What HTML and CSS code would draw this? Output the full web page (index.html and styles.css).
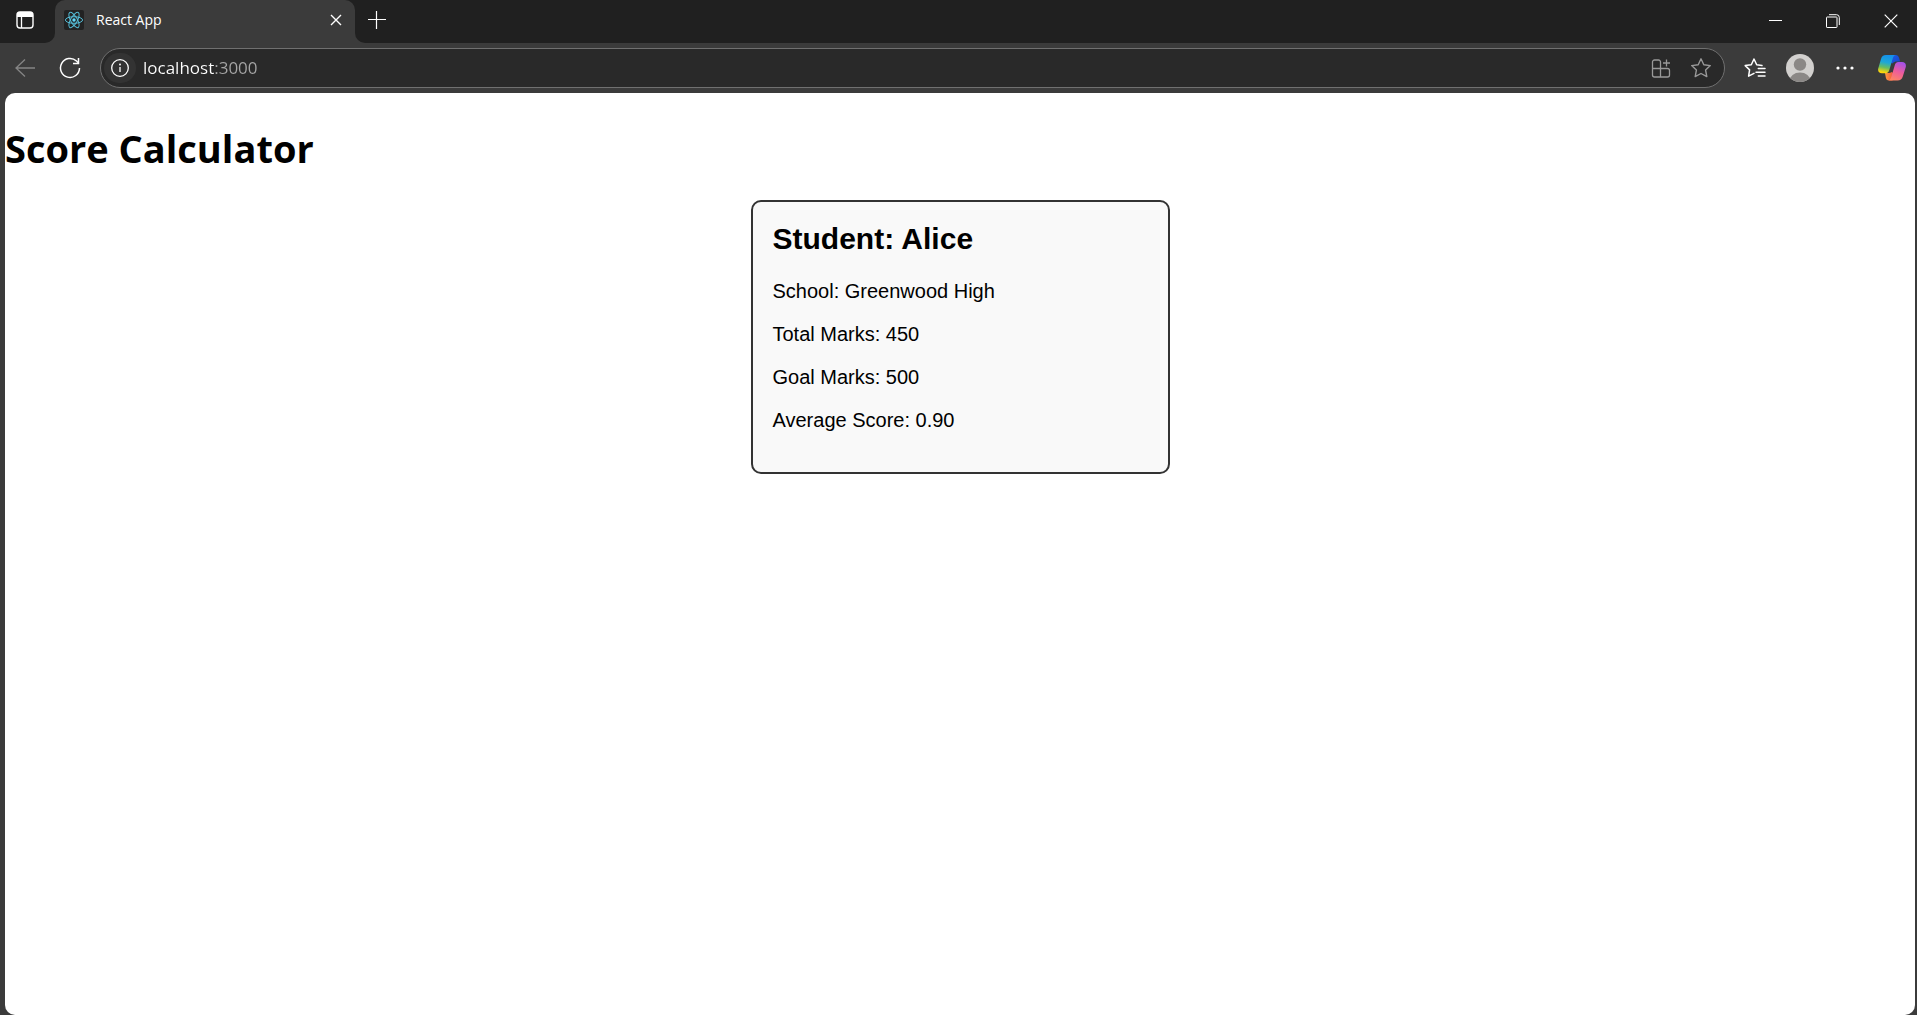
FILE: index.html
```html
<!DOCTYPE html>
<html lang="en">
<head>
<meta charset="utf-8">
<meta name="viewport" content="width=device-width, initial-scale=1">
<title>React App</title>
<link rel="stylesheet" href="styles.css">
</head>
<body>
<div class="browser">
  <header class="titlebar">
    <div class="titlebar-start">
      <button class="icon-button" type="button" aria-label="Tab actions">
        <svg width="20" height="20" viewBox="0 0 20 20"><rect x="2" y="2" width="16" height="16" rx="3" fill="none" stroke="#fff" stroke-width="1.4"/><path d="M2 7V5a3 3 0 0 1 3-3h10a3 3 0 0 1 3 3v2z" fill="#fff"/><path d="M6.500 6v12" stroke="#fff" stroke-width="1.3"/></svg>
      </button>
    </div>
    <div class="tab-slot">
      <div class="tab">
        <svg class="favicon" width="20" height="20" viewBox="0 0 20 20"><rect width="20" height="20" rx="2" fill="#222"/><g fill="none" stroke="#55bcd6" stroke-width="1"><ellipse cx="10" cy="10" rx="8.600" ry="3.300"/><ellipse cx="10" cy="10" rx="8.600" ry="3.300" transform="rotate(60 10 10)"/><ellipse cx="10" cy="10" rx="8.600" ry="3.300" transform="rotate(120 10 10)"/></g><circle cx="10" cy="10" r="1.700" fill="#61dafb"/></svg>
        <span class="tab-title">React App</span>
        <button class="tab-close" type="button" aria-label="Close tab">
          <svg width="12" height="12" viewBox="0 0 12 12"><path d="M1 1l10 10M11 1L1 11" stroke="#fff" stroke-width="1.400"/></svg>
        </button>
      </div>
    </div>
    <div class="titlebar-end">
      <button class="icon-button new-tab" type="button" aria-label="New tab">
        <svg width="18" height="18" viewBox="0 0 18 18"><path d="M0 8.500h18M8.500 0v18" stroke="#fff" stroke-width="1.200"/></svg>
      </button>
      <div class="window-controls">
        <button class="icon-button" type="button" aria-label="Minimize">
          <svg width="13" height="13" viewBox="0 0 13 13"><path d="M0 6.500h13" stroke="#fff"/></svg>
        </button>
        <button class="icon-button" type="button" aria-label="Restore">
          <svg width="14" height="14" viewBox="0 0 14 14" fill="none" stroke="#fff"><rect x=".5" y="3" width="10.500" height="10.500" rx=".6"/><path d="M3 .7h7.500A2.800 2.800 0 0 1 13.300 3.500V11"/></svg>
        </button>
        <button class="icon-button" type="button" aria-label="Close">
          <svg width="14" height="14" viewBox="0 0 14 14"><path d="M.7.7l12.600 12.600M13.300.7L.7 13.300" stroke="#fff" stroke-width="1.200"/></svg>
        </button>
      </div>
    </div>
  </header>

  <nav class="toolbar" aria-label="Browser">
    <button class="icon-button" type="button" aria-label="Back">
      <svg width="22" height="22" viewBox="0 0 22 22" fill="none" stroke="#858585" stroke-width="1.300"><path d="M21 11H2M11 2.500L2 11l9 8.500"/></svg>
    </button>
    <button class="icon-button" type="button" aria-label="Refresh">
      <svg width="22" height="22" viewBox="0 0 22 22" fill="none" stroke="#fff" stroke-width="1.500"><path d="M20.500 11A9.500 9.500 0 1 1 17.500 4L19.500 6"/><path d="M19.500 1v5.500H14"/></svg>
    </button>
    <div class="address-bar">
      <button class="site-info" type="button" aria-label="Site information">
        <svg width="20" height="20" viewBox="0 0 20 20" fill="none" stroke="#fff" stroke-width="1.300"><circle cx="10" cy="10" r="8.300"/><path d="M10 9v5"/><circle cx="10" cy="6.500" r=".4"/></svg>
      </button>
      <input class="address" type="text" aria-label="Address" value="localhost:3000" spellcheck="false">
      <button class="icon-button" type="button" aria-label="Install app">
        <svg width="20" height="20" viewBox="0 0 20 20" fill="none" stroke="#999" stroke-width="1.300"><path d="M9.500 10.500V4a2 2 0 0 0-2-2H3.500a2 2 0 0 0-2 2v13a2 2 0 0 0 2 2h13a2 2 0 0 0 2-2v-4.500a2 2 0 0 0-2-2h-15M9.500 10.500V19M15.500 1.500v7M12 5h7"/></svg>
      </button>
      <button class="icon-button" type="button" aria-label="Add to favorites">
        <svg width="22" height="22" viewBox="0 0 22 22" fill="none" stroke="#999" stroke-width="1.400" stroke-linejoin="round"><path d="M11 1.800l2.800 5.900 6.500.9-4.700 4.500 1.200 6.500-5.800-3.100-5.800 3.100 1.200-6.500L1.700 8.600l6.500-.9z"/></svg>
      </button>
    </div>
    <button class="icon-button" type="button" aria-label="Favorites">
      <svg width="22" height="22" viewBox="0 0 22 22" fill="none" stroke="#fff" stroke-width="1.500" stroke-linejoin="round" stroke-linecap="round"><path d="M18 8.600l-5.300-.9L10 2 7.300 7.700 1.200 8.600l4.400 4.300-1 6.300L10 16.300M14.300 11.500H21M12 15.300h9M14.300 19H21"/></svg>
    </button>
    <button class="icon-button" type="button" aria-label="Profile">
      <svg width="28" height="28" viewBox="0 0 28 28"><defs><clipPath id="avatar-clip"><circle cx="14" cy="14" r="14"/></clipPath></defs><g clip-path="url(#avatar-clip)"><rect width="28" height="28" fill="#d2d0ce"/><circle cx="14" cy="10.500" r="6.200" fill="#8b8886"/><ellipse cx="14" cy="27" rx="10.500" ry="8.500" fill="#8b8886"/></g></svg>
    </button>
    <button class="icon-button" type="button" aria-label="Settings and more">
      <svg width="18" height="6" viewBox="0 0 18 6" fill="#fff"><circle cx="2" cy="3" r="1.600"/><circle cx="9" cy="3" r="1.600"/><circle cx="16" cy="3" r="1.600"/></svg>
    </button>
    <button class="icon-button copilot" type="button" aria-label="Copilot">
      <svg width="28" height="28" viewBox="0 0 28 28">
        <defs>
          <linearGradient id="cp-left" x1=".5" y1="0" x2=".3" y2="1"><stop offset="0" stop-color="#1590ea"/><stop offset=".4" stop-color="#1da7d8"/><stop offset=".68" stop-color="#67bd61"/><stop offset=".95" stop-color="#ffd60a"/></linearGradient>
          <linearGradient id="cp-right" x1=".7" y1="0" x2=".3" y2="1"><stop offset="0" stop-color="#a551e8"/><stop offset=".5" stop-color="#ed5c9c"/><stop offset="1" stop-color="#ff8562"/></linearGradient>
          <linearGradient id="cp-top" x1="0" y1="0" x2="1" y2="1"><stop offset="0" stop-color="#1c5ce8"/><stop offset="1" stop-color="#1746c8"/></linearGradient>
          <linearGradient id="cp-bottom" x1="0" y1="0" x2="1" y2="0"><stop offset="0" stop-color="#ff9a3e"/><stop offset="1" stop-color="#ed493e"/></linearGradient>
        </defs>
        <path d="M14 1h3.500c2 0 3 1.200 3.600 3l1 3.500h-3c-2 0-3.500.5-4.600 2L12 8z" fill="url(#cp-top)"/>
        <path d="M7 19h4c1 0 1.800-.3 2.500-1l3.500 2-2.500 6.500H11c-2 0-2.700-1.300-3.200-3z" fill="url(#cp-bottom)"/>
        <path d="M8 1h10c-1.800 0-2.600 1.300-3.200 3.200L11.300 16c-.7 2.300-1.800 3.300-4 3.300H4C1 19.300-.5 17.500.3 14.200L3 5C3.700 2.400 5.200 1 8 1z" fill="url(#cp-left)"/>
        <path d="M20.500 8H24c3 0 4.500 2 3.700 5.300l-2.900 9.200c-.8 2.600-2.500 4-5.300 4H10c1.800 0 2.600-1.300 3.200-3.200l3.500-11.800C17.300 9.200 18.300 8 20.500 8z" fill="url(#cp-right)"/>
      </svg>
    </button>
  </nav>

  <main class="page">
    <h1 class="page-title">Score Calculator</h1>
    <section class="score-card">
      <h2 class="student">Student: Alice</h2>
      <p class="detail">School: Greenwood High</p>
      <p class="detail">Total Marks: 450</p>
      <p class="detail">Goal Marks: 500</p>
      <p class="detail">Average Score: 0.90</p>
    </section>
  </main>
</div>
</body>
</html>
```
FILE: styles.css
```css
:root {
  --frame: #3b3b3b;
  --frame-dark: #202020;
  --field: #292929;
  --ui-font: "Open Sans", "Noto Sans", sans-serif;
}

* {
  box-sizing: border-box;
}

body {
  margin: 0;
  background: var(--frame);
  font-family: var(--ui-font);
}

button {
  padding: 0;
  border: 0;
  background: none;
  color: inherit;
}

svg {
  display: block;
}

.browser {
  display: flex;
  flex-direction: column;
  min-height: 100vh;
}

.icon-button {
  display: grid;
  place-items: center;
  flex: none;
}

/* Title bar */
.titlebar {
  display: flex;
  height: 43px;
  color: #fff;
}

.titlebar-start {
  display: grid;
  place-items: center;
  width: 55px;
  padding: 0 6px 3px 0;
  background: var(--frame-dark);
  border-bottom-right-radius: 10px;
}

.tab-slot {
  width: 300px;
  background: linear-gradient(var(--frame-dark) 50%, var(--frame) 50%);
}

.tab {
  display: flex;
  align-items: center;
  gap: 12px;
  height: 100%;
  padding: 0 13px 3px 9px;
  background: var(--frame);
  border-radius: 10px 10px 0 0;
}

.tab-title {
  flex: 1;
  font-size: 14px;
  line-height: 20px;
}

.tab-close {
  display: grid;
  place-items: center;
}

.titlebar-end {
  display: flex;
  flex: 1;
  justify-content: space-between;
  background: var(--frame-dark);
  border-bottom-left-radius: 10px;
}

.new-tab {
  width: 44px;
  padding-bottom: 3px;
}

.window-controls {
  display: grid;
  grid-template-columns: 52px 64px 52px;
  padding-bottom: 2px;
}

/* Toolbar */
.toolbar {
  display: flex;
  align-items: center;
  height: 50px;
  padding-left: 2px;
}

.toolbar > .icon-button {
  width: 45px;
  height: 40px;
}

.toolbar > .copilot {
  width: 50px;
}

.address-bar {
  display: flex;
  flex: 1;
  align-items: center;
  height: 40px;
  margin: 0 7px 0 8px;
  padding: 0 3px;
  background: var(--field);
  border: 1px solid #707070;
  border-radius: 20px;
}

.address-bar .icon-button {
  width: 40px;
  height: 32px;
}

.site-info {
  display: grid;
  place-items: center;
  width: 32px;
  height: 30px;
  background: #333;
  border-radius: 16px;
}

/* The host is bright and the port after it is dimmed */
.address {
  flex: 1;
  min-width: 0;
  height: 24px;
  padding: 0 0 0 7px;
  border: 0;
  outline: 0;
  background: linear-gradient(90deg, #fff 79px, #a6a6a6 79px);
  -webkit-background-clip: text;
  background-clip: text;
  color: transparent;
  caret-color: #fff;
  font-family: inherit;
  font-size: 17px;
  line-height: 24px;
}

/* Page content */
.page {
  flex: 1;
  margin: 0 2px 0 5px;
  background: #fff;
  border-radius: 10px;
  color: #000;
}

.page-title {
  margin: 0;
  padding: 29px 0 25px;
  font-size: 38px;
  line-height: 53px;
}

.score-card {
  width: 100%;
  max-width: 419px;
  margin: 0 auto;
  padding: 20px 20px 40px;
  background: #f9f9f9;
  border: 2px solid #333;
  border-radius: 10px;
  font-family: "Liberation Sans", Arial, sans-serif;
}

.student {
  margin: 0 0 24px;
  font-size: 30px;
  line-height: 34px;
}

.detail {
  margin: 0 0 20px;
  font-size: 20px;
  line-height: 23px;
}

.detail:last-child {
  margin-bottom: 0;
}
```
